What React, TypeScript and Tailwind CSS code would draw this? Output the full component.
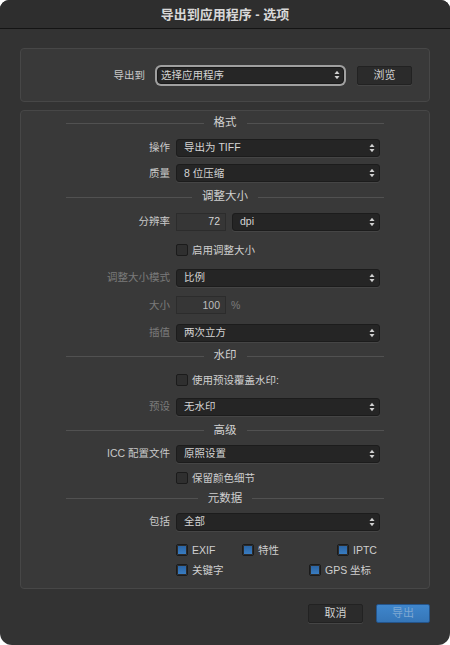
import React from "react";
import clsx from "clsx";

const FONT = "[font-family:'Liberation_Sans','Noto_Sans_CJK_SC',sans-serif]";

function Arrows() {
  return (
    <svg width="6" height="10" viewBox="0 0 6 10" className="shrink-0">
      <path d="M0.5 4 L3 0.8 L5.5 4 Z" fill="#d0d0d0" />
      <path d="M0.5 6 L3 9.2 L5.5 6 Z" fill="#d0d0d0" />
    </svg>
  );
}

function Select({ value, className }: { value: string; className?: string }) {
  return (
    <div
      className={clsx(
        "flex h-[18px] items-center justify-between rounded-[3px] border border-[#1c1c1c] bg-[#252525] pl-[7px] pr-[4px] text-[#d4d4d4] shadow-[0_1px_0_#454545]",
        className
      )}
    >
      <span className="leading-none">{value}</span>
      <Arrows />
    </div>
  );
}

function NumInput({ value, dim }: { value: string; dim?: boolean }) {
  return (
    <div
      className={clsx(
        "flex h-[18px] w-[50px] items-center justify-end border border-[#2c2c2c] bg-[#363636] pr-[5px] leading-none",
        dim ? "text-[#bdbdbd]" : "text-[#d4d4d4]"
      )}
    >
      {value}
    </div>
  );
}

function Check({ label, checked }: { label: string; checked?: boolean }) {
  return (
    <div className="flex items-center gap-[4px]">
      <div
        className={clsx(
          "h-[12px] w-[12px] rounded-[2px] border border-[#1b1b1b]",
          checked
            ? "bg-gradient-to-b from-[#2a62a0] to-[#3b7fc4] shadow-[inset_0_0_0_1px_#2c2c2c]"
            : "bg-[#2f2f2f]"
        )}
      />
      <span className="leading-none text-[#cfcfcf]">{label}</span>
    </div>
  );
}

function Heading({ title, h }: { title: string; h: string }) {
  return (
    <div className={clsx("mx-[45px] flex items-center", h)}>
      <div className="h-px flex-1 bg-[#515151]" />
      <span className="px-[10px] text-[11.5px] leading-none text-[#d0d0d0]">{title}</span>
      <div className="h-px flex-1 bg-[#515151]" />
    </div>
  );
}

function Row({
  label,
  dim,
  h,
  children,
}: {
  label?: string;
  dim?: boolean;
  h: string;
  children: React.ReactNode;
}) {
  return (
    <div className={clsx("grid grid-cols-[149px_204px] items-center gap-x-[6px]", h)}>
      <span className={clsx("text-right leading-none", dim ? "text-[#7b7b7b]" : "text-[#c9c9c9]")}>
        {label}
      </span>
      <div>{children}</div>
    </div>
  );
}

export default function App() {
  return (
    <div className={clsx("h-[645px] w-[450px] bg-white text-[10.5px]", FONT)}>
      <div className="flex h-[645px] w-[450px] flex-col overflow-hidden rounded-b-[12px] rounded-t-[9px] bg-[#333333]">
        <div className="flex h-[29px] shrink-0 items-center justify-center border-b border-[#141414] bg-[#2e2e2e]">
          <span className="text-[13px] font-bold leading-none text-[#d8d8d8]">导出到应用程序 - 选项</span>
        </div>

        <div className="mx-[20px] mt-[19px] flex h-[54px] items-center rounded-[4px] border border-[#474747] bg-[#393939]">
          <span className="w-[124px] text-right leading-none text-[#c9c9c9]">导出到</span>
          <div className="ml-[10px] w-[191px] rounded-[6px] bg-[#a0a0a0] p-[2px]">
            <div className="flex h-[17px] items-center justify-between rounded-[4px] border border-[#1a1a1a] bg-[#262626] pl-[3px] pr-[3px] text-[#d4d4d4]">
              <span className="leading-none">选择应用程序</span>
              <Arrows />
            </div>
          </div>
          <div className="ml-[11px] flex h-[19px] w-[55px] items-center justify-center rounded-[2px] border border-[#222] bg-[#2b2b2b] text-[11px] leading-none text-[#d2d2d2] shadow-[0_1px_0_#454545]">
            浏览
          </div>
        </div>

        <div className="mx-[20px] mt-[8px] flex h-[479px] flex-col rounded-[4px] border border-[#474747] bg-[#393939]">
          <Heading title="格式" h="h-[24px]" />
          <Row label="操作" h="h-[25px]">
            <Select value="导出为 TIFF" />
          </Row>
          <Row label="质量" h="h-[26px]">
            <Select value="8 位压缩" />
          </Row>
          <Heading title="调整大小" h="h-[22px]" />
          <Row label="分辨率" h="h-[27px]">
            <div className="flex items-center gap-[6px]">
              <NumInput value="72" />
              <Select value="dpi" className="flex-1" />
            </div>
          </Row>
          <Row h="h-[30px]">
            <Check label="启用调整大小" />
          </Row>
          <Row label="调整大小模式" dim h="h-[25px]">
            <Select value="比例" />
          </Row>
          <Row label="大小" dim h="h-[30px]">
            <div className="flex items-center gap-[5px]">
              <NumInput value="100" dim />
              <span className="leading-none text-[#7b7b7b]">%</span>
            </div>
          </Row>
          <Row label="插值" dim h="h-[25px]">
            <Select value="两次立方" />
          </Row>
          <Heading title="水印" h="h-[22px]" />
          <Row h="h-[26px]">
            <Check label="使用预设覆盖水印:" />
          </Row>
          <Row label="预设" dim h="h-[27px]">
            <Select value="无水印" />
          </Row>
          <Heading title="高级" h="h-[21px]" />
          <Row label="ICC 配置文件" h="h-[25px]">
            <Select value="原照设置" />
          </Row>
          <Row h="h-[24px]">
            <Check label="保留颜色细节" />
          </Row>
          <Heading title="元数据" h="h-[17px]" />
          <Row label="包括" h="h-[29px]">
            <Select value="全部" />
          </Row>
          <div className="ml-[155px] mt-[4px] flex flex-col">
            <div className="flex h-[20px] items-center">
              <div className="w-[66px]">
                <Check label="EXIF" checked />
              </div>
              <div className="w-[95px]">
                <Check label="特性" checked />
              </div>
              <Check label="IPTC" checked />
            </div>
            <div className="flex h-[20px] items-center">
              <div className="w-[133px]">
                <Check label="关键字" checked />
              </div>
              <Check label="GPS 坐标" checked />
            </div>
          </div>
        </div>

        <div className="mr-[20px] mt-[15px] flex justify-end gap-[13px]">
          <div className="flex h-[19px] w-[55px] items-center justify-center rounded-[2px] border border-[#222] bg-[#2b2b2b] text-[11px] leading-none text-[#d2d2d2] shadow-[0_1px_0_#454545]">
            取消
          </div>
          <div className="flex h-[19px] w-[54px] items-center justify-center rounded-[2px] border border-[#24548a] bg-gradient-to-b from-[#3f86cc] to-[#3576b8] text-[11px] leading-none text-[#7fa8d2]">
            导出
          </div>
        </div>
      </div>
    </div>
  );
}
